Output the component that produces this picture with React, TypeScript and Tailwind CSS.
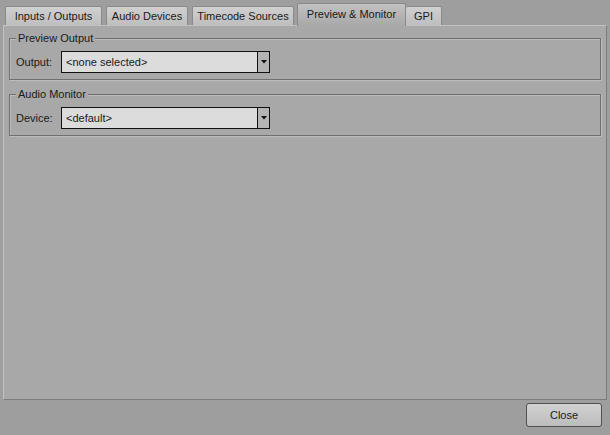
const tabs = [
  { label: "Inputs / Outputs", w: "w-[97px]" },
  { label: "Audio Devices", w: "w-[82px]" },
  { label: "Timecode Sources", w: "w-[102px]" },
];

function Select({ value }: { value: string }) {
  return (
    <div className="flex h-[22px] w-[209px] border border-[#111] bg-[#dcdcdc]">
      <div className="flex-1 pl-[4px] leading-[20px] text-[#1a1a1a]">{value}</div>
      <div className="flex w-[12px] items-center justify-center border-l border-[#111] bg-[#b4b4b4]">
        <svg width="6" height="4" viewBox="0 0 6 4">
          <path d="M0 0h6L3 3.5z" fill="#111" />
        </svg>
      </div>
    </div>
  );
}

function Group({ title, label, value }: { title: string; label: string; value: string }) {
  return (
    <div className="relative mx-[5px] h-[42px] border border-[#6f6f6f] shadow-[inset_1px_1px_0_#bcbcbc,1px_1px_0_#bcbcbc]">
      <span className="absolute left-[6px] top-[-8px] bg-[#a8a8a8] px-[2px] leading-[14px] text-[#1a1a1a]">
        {title}
      </span>
      <div className="flex items-center pl-[6px] pt-[12px]">
        <span className="w-[45px] text-[#1a1a1a]">{label}</span>
        <Select value={value} />
      </div>
    </div>
  );
}

export default function App() {
  return (
    <div
      className="flex h-[435px] w-[610px] flex-col bg-[#9e9e9e] text-[11px]"
      style={{ fontFamily: '"Liberation Sans", Arial, sans-serif' }}
    >
      <div className="flex h-[26px] items-end pl-[5px]">
        <div className="flex items-end gap-[4px]">
          {tabs.map((t) => (
            <div
              key={t.label}
              className={`${t.w} flex h-[20px] items-center justify-center rounded-t-[2px] border border-b-0 border-[#8a8a8a] bg-gradient-to-b from-[#d0d0d0] to-[#bdbdbd] text-[#1a1a1a]`}
            >
              {t.label}
            </div>
          ))}
        </div>
        <div className="relative z-10 ml-[3px] flex h-[23px] w-[109px] items-center justify-center rounded-t-[2px] border border-b-0 border-[#8a8a8a] bg-gradient-to-b from-[#c2c2c2] to-[#a8a8a8] pb-[2px] text-[#1a1a1a]">
          Preview &amp; Monitor
        </div>
        <div className="flex h-[20px] w-[36px] items-center justify-center rounded-t-[2px] border border-b-0 border-l-0 border-[#8a8a8a] bg-gradient-to-b from-[#d0d0d0] to-[#bdbdbd] text-[#1a1a1a]">
          GPI
        </div>
      </div>
      <div className="mx-[3px] -mt-px flex h-[375px] flex-col gap-[14px] border border-[#c2c2c2] border-b-[#7c7c7c] border-r-[#7c7c7c] bg-[#a8a8a8] pt-[12px]">
        <Group title="Preview Output" label="Output:" value="<none selected>" />
        <Group title="Audio Monitor" label="Device:" value="<default>" />
      </div>
      <div className="flex justify-end pr-[8px] pt-[3px]">
        <button className="h-[24px] w-[76px] rounded-[3px] border border-[#505050] bg-gradient-to-b from-[#d2d2d2] to-[#bcbcbc] text-[11px] text-[#1a1a1a]">
          Close
        </button>
      </div>
    </div>
  );
}
